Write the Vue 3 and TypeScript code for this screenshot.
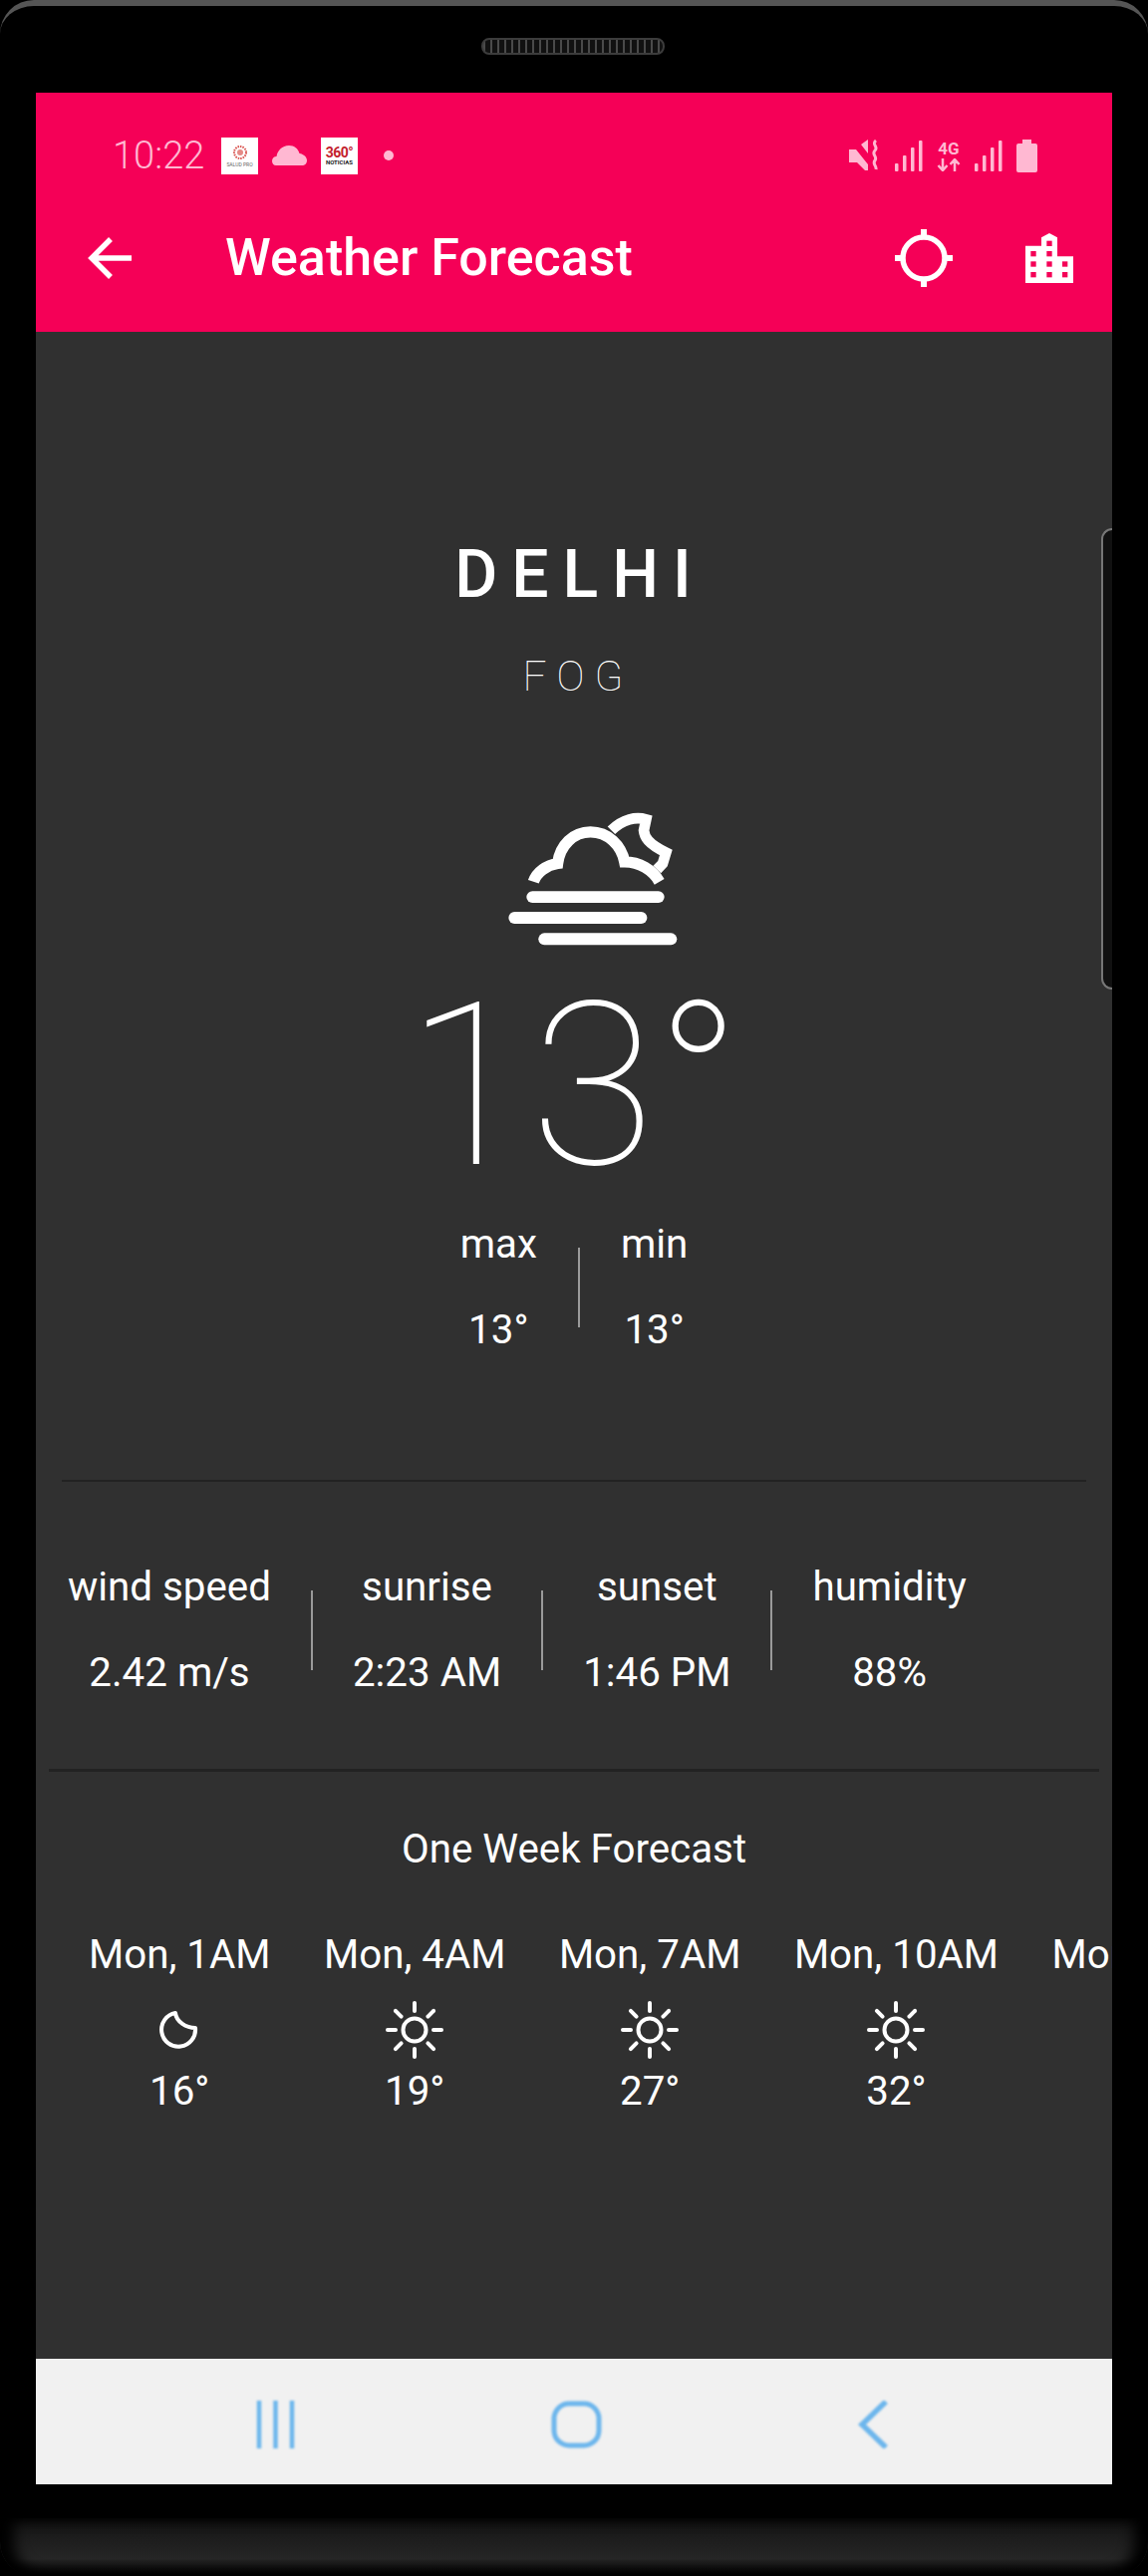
<template>
  <div class="phone">
    <div class="speaker"></div>
    <div class="side-button"></div>

    <div class="screen">
      <header class="header">
        <div class="status-bar">
          <span class="clock">10:22</span>
          <span class="thumb thumb-a">
            <svg class="rosette" viewBox="0 0 16 16" width="16" height="16">
              <circle cx="8" cy="8" r="6" fill="none" stroke="#d9534f" stroke-width="2" stroke-dasharray="1.500 1" />
              <circle cx="8" cy="8" r="3" fill="#e58a86" />
            </svg>
            <span class="thumb-a-text">SALUD PRO</span>
          </span>
          <svg class="cloud" viewBox="0 0 35 20" width="35" height="20">
            <path d="M4 20C1.5 20 0 18 0 15.5 0 13 2 11 4.5 11 5.5 5 10 0 17 0c5.500 0 9 3 10.500 8 4.500.5 7.500 4 7.500 7 0 3-2 5-5 5z" fill="#ffb8d2" />
          </svg>
          <span class="thumb thumb-b">
            <span class="thumb-b-num">360°</span>
            <span class="thumb-b-text">NOTICIAS</span>
          </span>
          <span class="dot"></span>
          <div class="status-right">
            <svg viewBox="0 0 32 32" width="32" height="32">
              <path d="M12 5l7-5v14zM0 10h7l12 15v6h-3l-8-8H0z" fill="#ffb8d2" />
              <path d="M27 1c-5 4 3 6-1 10s3 6 0 10 2 5 1 9" fill="none" stroke="#ffb8d2" stroke-width="3" />
            </svg>
            <svg class="signal" viewBox="0 0 28 31" width="28" height="31">
              <rect v-for="bar in signalBars" :key="bar.x" :x="bar.x" :y="bar.y" width="3.500" :height="31 - bar.y" rx="1" fill="#ffb8d2" />
            </svg>
            <div class="network">
              <span class="network-label">4G</span>
              <svg viewBox="0 0 24 13" width="24" height="13">
                <path d="M6 0v11M1.500 7L6 12l4.500-5M18 13V2M13.500 6L18 1l4.500 5" fill="none" stroke="#ffb8d2" stroke-width="2.500" />
              </svg>
            </div>
            <svg class="signal" viewBox="0 0 28 31" width="28" height="31">
              <rect v-for="bar in signalBars" :key="bar.x" :x="bar.x" :y="bar.y" width="3.500" :height="31 - bar.y" rx="1" fill="#ffb8d2" />
            </svg>
            <svg viewBox="0 0 21 33" width="21" height="33">
              <path d="M6 0h9v4h4a2 2 0 0 1 2 2v25a2 2 0 0 1-2 2H2a2 2 0 0 1-2-2V6a2 2 0 0 1 2-2h4z" fill="#ffb8d2" />
            </svg>
          </div>
        </div>

        <div class="toolbar">
          <svg class="back" viewBox="0 0 44 42" width="44" height="42">
            <path d="M44 21H4M23 2 4 21l19 19" fill="none" stroke="#fff" stroke-width="5.500" />
          </svg>
          <span class="title">Weather Forecast</span>
          <svg class="target" viewBox="-30 -30 60 60" width="60" height="60">
            <circle r="21" fill="none" stroke="#fff" stroke-width="5.500" />
            <path d="M0-29v10M0 19v10M-29 0h10M19 0h10" stroke="#fff" stroke-width="6" />
          </svg>
          <svg class="city" viewBox="567 325 144 150" width="48" height="50">
            <path d="M567 475V363h48v-25l24-13 24 13v57h48v80z" fill="#fff" />
            <rect v-for="win in cityWindows" :key="win.join()" :x="win[0] - 8" :y="win[1] - 8" width="16" height="16" fill="#f50057" />
          </svg>
        </div>
      </header>

      <main class="content">
        <section class="current">
          <h1 class="place">DELHI</h1>
          <p class="condition">FOG</p>
          <svg class="fog-icon" viewBox="380 930 520 430" width="173" height="143">
            <g fill="none" stroke="#fff">
              <path stroke-width="34" d="M465 1155C475 1125 505 1105 538 1100 545 1045 585 1005 637 1005 690 1005 730 1045 740 1095 785 1095 825 1120 845 1155" />
              <path stroke-width="32" d="M700 1000C735 965 775 958 805 967L798 1000C800 1020 810 1040 865 1067L855 1100 838 1118" />
              <g stroke-width="36" stroke-linecap="round">
                <path d="M462 1201H842" />
                <path d="M408 1264H790" />
                <path d="M498 1328H880" />
              </g>
            </g>
          </svg>
          <div class="temperature">13°</div>
          <div class="range">
            <div class="stat">
              <span>max</span>
              <span>13°</span>
            </div>
            <div class="rule"></div>
            <div class="stat">
              <span>min</span>
              <span>13°</span>
            </div>
          </div>
        </section>

        <hr class="line line-short" />

        <section class="details">
          <template v-for="(item, i) in details" :key="item.label">
            <div v-if="i > 0" class="rule"></div>
            <div class="stat">
              <span>{{ item.label }}</span>
              <span>{{ item.value }}</span>
            </div>
          </template>
        </section>

        <hr class="line line-long" />

        <section class="forecast">
          <h2 class="forecast-title">One Week Forecast</h2>
          <div class="forecast-row">
            <div v-for="hour in hours" :key="hour.time" class="hour">
              <span>{{ hour.time }}</span>
              <svg class="hour-icon" viewBox="-30 -30 60 60" width="60" height="60">
                <path
                  v-if="hour.icon === 'moon'"
                  d="M-4-17A17 17 0 1 0 16-2C7-2-3-8-4-17Z"
                  fill="none"
                  stroke="#fff"
                  stroke-width="4"
                  stroke-linejoin="round"
                />
                <g v-else fill="none" stroke="#fff" stroke-width="4">
                  <circle r="11.500" />
                  <path v-for="ray in sunRays" :key="ray" :d="ray" stroke-linecap="round" />
                </g>
              </svg>
              <span>{{ hour.temp }}</span>
            </div>
          </div>
        </section>
      </main>

      <nav class="nav-bar">
        <svg class="nav-icon" viewBox="0 0 39 48" width="39" height="48">
          <path d="M3 0v48M19.500 0v48M36 0v48" stroke="#6db6ec" stroke-width="4.500" />
        </svg>
        <svg class="nav-icon" viewBox="0 0 51 48" width="51" height="48">
          <rect x="3" y="3" width="45" height="42" rx="15" fill="none" stroke="#6db6ec" stroke-width="5" />
        </svg>
        <svg class="nav-icon" viewBox="0 0 30 48" width="30" height="48">
          <path d="M28 1 4 24l24 23" fill="none" stroke="#6db6ec" stroke-width="5.500" />
        </svg>
      </nav>
    </div>

    <div class="chin"></div>
  </div>
</template>

<script setup lang="ts">
interface DetailItem {
  label: string;
  value: string;
}

interface HourItem {
  time: string;
  icon: 'moon' | 'sun';
  temp: string;
}

const details: DetailItem[] = [
  { label: 'wind speed', value: '2.42 m/s' },
  { label: 'sunrise', value: '2:23 AM' },
  { label: 'sunset', value: '1:46 PM' },
  { label: 'humidity', value: '88%' },
];

const hours: HourItem[] = [
  { time: 'Mon, 1AM', icon: 'moon', temp: '16°' },
  { time: 'Mon, 4AM', icon: 'sun', temp: '19°' },
  { time: 'Mon, 7AM', icon: 'sun', temp: '27°' },
  { time: 'Mon, 10AM', icon: 'sun', temp: '32°' },
  { time: 'Mon, 1PM', icon: 'sun', temp: '33°' },
];

const signalBars = [
  { x: 0, y: 23 },
  { x: 8, y: 15 },
  { x: 16, y: 7 },
  { x: 24, y: 0 },
];

const cityWindows = [
  [639, 356],
  [591, 387],
  [639, 387],
  [591, 418],
  [639, 418],
  [686, 418],
  [591, 450],
  [639, 450],
  [686, 450],
];

// eight rays round the sun
const sunRays = Array.from({ length: 8 }, (_, i) => {
  const angle = (i * Math.PI) / 4;
  const cos = Math.cos(angle);
  const sin = Math.sin(angle);
  return `M${(19 * cos).toFixed(1)} ${(19 * sin).toFixed(1)}L${(27 * cos).toFixed(1)} ${(27 * sin).toFixed(1)}`;
});
</script>

<style scoped>
.phone {
  position: relative;
  box-sizing: border-box;
  width: 1152px;
  height: 2585px;
  padding: 87px 36px 0;
  overflow: hidden;
  background: #000;
  border-top: 6px solid #555;
  border-radius: 34px 34px 0 0;
  color: #fff;
  font-family: Roboto, "Liberation Sans", sans-serif;
}

.speaker {
  position: absolute;
  top: 32px;
  left: 483px;
  box-sizing: border-box;
  width: 184px;
  height: 17px;
  border: 2px solid #3c3c3c;
  border-radius: 8px;
  background: repeating-linear-gradient(90deg, #4a4a4a 0 2px, #111 2px 7px);
}

.side-button {
  position: absolute;
  top: 524px;
  left: 1105px;
  box-sizing: border-box;
  width: 11px;
  height: 463px;
  border: 2px solid #777;
  border-right: 0;
  border-radius: 11px 0 0 11px;
  background: #111;
  z-index: 1;
}

.screen {
  display: flex;
  flex-direction: column;
  height: 2400px;
  background: #303030;
}

.header {
  display: flex;
  flex-direction: column;
  height: 240px;
  background: #f50057;
}

.status-bar {
  display: flex;
  align-items: center;
  height: 50px;
  margin-top: 38px;
  padding: 0 75px 0 77px;
  color: #ffb8d2;
}

.clock {
  width: 95px;
  font-size: 38px;
  font-weight: 300;
  line-height: 1;
}

.thumb {
  display: flex;
  flex-direction: column;
  align-items: center;
  justify-content: center;
  box-sizing: border-box;
  width: 37px;
  height: 37px;
  background: #fff;
}

.thumb-a {
  margin-left: 14px;
}

.thumb-a-text {
  margin-top: 2px;
  color: #666;
  font-size: 5px;
  line-height: 1;
  white-space: nowrap;
}

.thumb-b-num {
  color: #c3202c;
  font-size: 14px;
  font-weight: 700;
  letter-spacing: -0.5px;
  line-height: 1;
}

.thumb-b-text {
  color: #222;
  font-size: 6px;
  font-weight: 700;
  line-height: 1;
}

.cloud {
  margin-left: 14px;
}

.thumb-b {
  margin-left: 14px;
}

.dot {
  width: 10px;
  height: 10px;
  margin-left: 26px;
  border-radius: 50%;
  background: #ffb8d2;
}

.status-right {
  display: flex;
  align-items: center;
  gap: 14px;
  margin-left: auto;
}

.network {
  display: flex;
  flex-direction: column;
  align-items: center;
  gap: 1px;
}

.network-label {
  font-size: 17px;
  font-weight: 700;
  line-height: 17px;
}

.toolbar {
  display: flex;
  align-items: center;
  height: 78px;
  margin-top: 39px;
  padding-left: 52px;
}

.title {
  margin-left: 94px;
  font-size: 52px;
  font-weight: 500;
  line-height: 1;
}

.target {
  margin-left: auto;
}

.city {
  margin: 0 39px 0 72px;
}

.content {
  flex: 1;
  min-height: 0;
}

.current {
  display: flex;
  flex-direction: column;
  align-items: center;
  padding-top: 205px;
}

.place {
  margin: 0;
  padding-left: 12px;
  font-size: 66px;
  font-weight: 500;
  letter-spacing: 14px;
  line-height: 78px;
}

.condition {
  margin: 38px 0 0;
  padding-left: 8px;
  font-size: 42px;
  font-weight: 100;
  letter-spacing: 10px;
  line-height: 50px;
}

.fog-icon {
  margin: 106px 0 0 34px;
}

.temperature {
  margin-top: 7px;
  font-size: 228px;
  font-weight: 100;
  line-height: 260px;
}

.stat {
  display: flex;
  flex-direction: column;
  align-items: center;
  gap: 36px;
  font-size: 40.3px;
  line-height: 50px;
  white-space: nowrap;
}

.rule {
  flex: none;
  width: 2px;
  height: 80px;
  margin-top: 28px;
  background: #9a9a9a;
}

.range {
  display: flex;
  gap: 41px;
  margin-top: 4px;
}

.line {
  border: 0;
  background: #222;
}

.line-short {
  height: 2px;
  margin: 125px 26px 0;
}

.details {
  display: flex;
  gap: 40px;
  padding: 81px 0 0 32px;
}

.line-long {
  height: 3px;
  margin: 71px 13px 0;
}

.forecast-title {
  margin: 53px 0 0;
  font-size: 40.3px;
  font-weight: 400;
  line-height: 50px;
  text-align: center;
}

.forecast-row {
  display: flex;
  gap: 53.5px;
  overflow: hidden;
  margin-top: 56px;
  padding-left: 53px;
}

.hour {
  display: flex;
  flex: none;
  flex-direction: column;
  align-items: center;
  font-size: 40.3px;
  line-height: 50px;
}

.hour-icon {
  margin: 20px 0 7px;
}

.nav-bar {
  display: flex;
  align-items: center;
  height: 121px;
  padding: 5px 0 0 221px;
  gap: 257px;
  background: #f1f1f1;
}

.nav-icon {
  filter: blur(1px);
}

.chin {
  height: 58px;
  margin: 34px -36px 0;
  border-radius: 0 0 34px 34px;
  background: linear-gradient(#131313, #262626 70%, #000);
  box-shadow: inset 14px 0 14px #000, inset -14px 0 14px #000;
}
</style>

<style>
body {
  background: #000;
}
</style>
